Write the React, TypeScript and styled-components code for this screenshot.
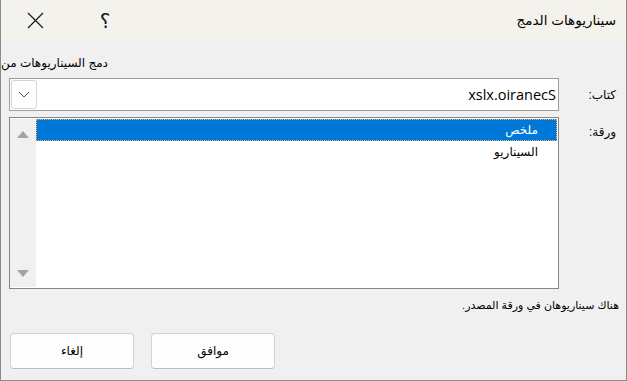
import React from 'react';
import styled, { createGlobalStyle } from 'styled-components';

const GlobalStyle = createGlobalStyle`
    html, body {
        margin: 0;
        padding: 0;
        background: #f0f0f0;
    }
    * {
        box-sizing: border-box;
    }
`;

const Window = styled.div`
    direction: rtl;
    width: 627px;
    height: 381px;
    background: #f0f0f0;
    border: 1px solid #8a8a8a;
    border-top: none;
    font-family: "Liberation Sans", "DejaVu Sans", sans-serif;
    font-size: 12px;
    color: #000;
    overflow: hidden;
`;

const TitleBar = styled.div`
    display: flex;
    align-items: center;
    justify-content: space-between;
    height: 41px;
    background: #f4f2ec;
    padding-right: 10px;
`;

const Title = styled.div`
    font-size: 13.5px;
    line-height: 18px;
`;

const Controls = styled.div`
    display: flex;
    align-items: center;
    gap: 24px;
    padding-left: 11px;
`;

const ControlButton = styled.div`
    width: 46px;
    height: 30px;
    display: flex;
    align-items: center;
    justify-content: center;
    font-size: 20px;
    color: #1a1a1a;
`;

const GroupLabel = styled.div`
    margin-top: 14px;
    height: 16px;
    line-height: 16px;
    text-align: left;
`;

const FormGrid = styled.div`
    display: grid;
    grid-template-columns: 67px 550px;
    grid-template-rows: 33px 172px;
    row-gap: 6px;
    margin-top: 7px;
`;

const FieldLabel = styled.div<{ $top: number }>`
    padding-right: 10px;
    padding-top: ${p => p.$top}px;
    line-height: 16px;
`;

const Combo = styled.div`
    display: flex;
    align-items: center;
    background: #fff;
    border: 1px solid #9e9e9e;
    padding: 1px;
`;

const ComboText = styled.div`
    flex: 1;
    padding-right: 1px;
    font-family: "Open Sans", "Liberation Sans", sans-serif;
    font-size: 14.5px;
    line-height: 18px;
`;

const DropButton = styled.div`
    width: 26px;
    height: 29px;
    border: 1px solid #d4d4d4;
    border-radius: 3px;
    display: flex;
    align-items: center;
    justify-content: center;
`;

const ListBox = styled.div`
    display: flex;
    background: #fff;
    border: 1px solid #82868c;
    padding: 1px 1px 1px 0;
`;

const Items = styled.div`
    flex: 1;
`;

const Item = styled.div<{ $selected?: boolean }>`
    height: 22px;
    line-height: 20px;
    padding-right: 18px;
    color: ${p => (p.$selected ? '#fff' : '#000')};
    background: ${p => (p.$selected ? '#0078d7' : 'transparent')};
    border: 1px dotted ${p => (p.$selected ? '#f0b070' : 'transparent')};
`;

const ScrollBar = styled.div`
    width: 26px;
    background: #f0f0f0;
    display: flex;
    flex-direction: column;
    justify-content: space-between;
    align-items: center;
    padding: 12px 0 10px;
`;

const Arrow = styled.div<{ $down?: boolean }>`
    width: 0;
    height: 0;
    border-left: 6px solid transparent;
    border-right: 6px solid transparent;
    ${p =>
        p.$down
            ? 'border-top: 7px solid #a3a3a3;'
            : 'border-bottom: 7px solid #a3a3a3;'}
`;

const Message = styled.div`
    margin-top: 8px;
    padding-right: 7px;
    font-size: 11px;
    line-height: 16px;
`;

const ButtonRow = styled.div`
    display: flex;
    justify-content: flex-end;
    gap: 17px;
    margin-top: 20px;
    padding-left: 9px;
`;

const Button = styled.div`
    width: 124px;
    height: 36px;
    display: flex;
    align-items: center;
    justify-content: center;
    background: #fdfdfd;
    border: 1px solid #d2d2d2;
    border-bottom-color: #bdbdbd;
    border-radius: 4px;
`;

const Chevron = () => (
    <svg width="12" height="7" viewBox="0 0 12 7">
        <path d="M1 1 L6 6 L11 1" fill="none" stroke="#555" strokeWidth="1" />
    </svg>
);

const CloseIcon = () => (
    <svg width="17" height="17" viewBox="0 0 17 17">
        <path d="M1 1 L16 16 M16 1 L1 16" stroke="#1a1a1a" strokeWidth="1.2" />
    </svg>
);

const App: React.FC = () => {
    return (
        <>
            <GlobalStyle />
            <Window>
                <TitleBar>
                    <Title>سيناريوهات الدمج</Title>
                    <Controls>
                        <ControlButton>؟</ControlButton>
                        <ControlButton>
                            <CloseIcon />
                        </ControlButton>
                    </Controls>
                </TitleBar>
                <GroupLabel>دمج السيناريوهات من</GroupLabel>
                <FormGrid>
                    <FieldLabel $top={9}>كتاب:</FieldLabel>
                    <Combo>
                        <ComboText>xslx.oiranecS</ComboText>
                        <DropButton>
                            <Chevron />
                        </DropButton>
                    </Combo>
                    <FieldLabel $top={7}>ورقة:</FieldLabel>
                    <ListBox>
                        <Items>
                            <Item $selected>ملخص</Item>
                            <Item>السيناريو</Item>
                        </Items>
                        <ScrollBar>
                            <Arrow />
                            <Arrow $down />
                        </ScrollBar>
                    </ListBox>
                </FormGrid>
                <Message>هناك سيناريوهان في ورقة المصدر.</Message>
                <ButtonRow>
                    <Button>موافق</Button>
                    <Button>إلغاء</Button>
                </ButtonRow>
            </Window>
        </>
    );
};

export default App;
